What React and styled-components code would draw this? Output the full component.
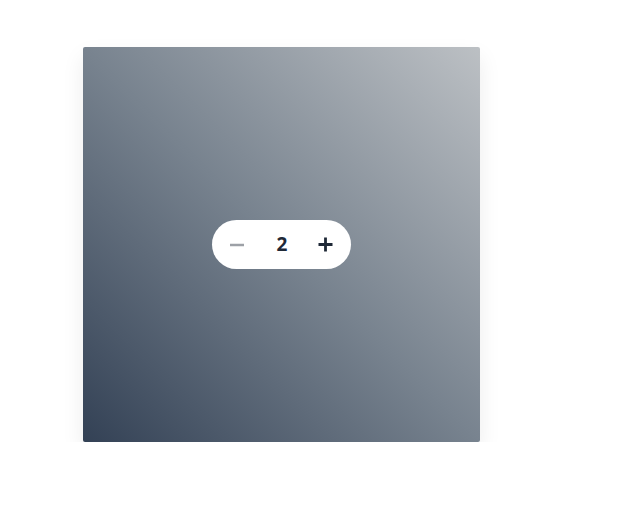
import React, { useState } from "react";
import styled, { createGlobalStyle } from "styled-components";

const GlobalStyle = createGlobalStyle`
    body {
        margin: 0;
        background: #ffffff;
        font-family: "Open Sans", "Noto Sans", sans-serif;
    }
`;

const Page = styled.div`
    padding: 47px 0 0 83px;
`;

const Card = styled.div`
    width: 397px;
    height: 395px;
    border-radius: 2px;
    background: linear-gradient(to top right, #334155 0%, #78838f 50%, #bcc0c4 100%);
    box-shadow: 0 10px 22px rgba(0, 0, 0, 0.08);
    display: flex;
    align-items: center;
    justify-content: center;
`;

const Stepper = styled.div`
    width: 139px;
    height: 49px;
    border-radius: 25px;
    background: #ffffff;
    display: flex;
    align-items: center;
    justify-content: space-between;
    padding: 0 17px 0 16px;
    box-sizing: border-box;
`;

const StepButton = styled.button`
    width: 18px;
    height: 18px;
    border: none;
    background: none;
    padding: 0;
    display: flex;
    align-items: center;
    justify-content: center;
    cursor: pointer;
    color: ${(p) => (p.$disabled ? "#9da1a7" : "#1f2937")};
`;

const Count = styled.span`
    font-size: 19px;
    font-weight: 700;
    color: #1f2937;
    line-height: 1;
    margin-left: 2px;
`;

const App = () => {
    const [count, setCount] = useState(2);

    return (
        <Page>
            <GlobalStyle />
            <Card>
                <Stepper>
                    <StepButton $disabled onClick={() => setCount(Math.max(1, count - 1))}>
                        <svg width="16" height="16" viewBox="0 0 16 16">
                            <path d="M1 8h14" stroke="currentColor" strokeWidth="2.5" />
                        </svg>
                    </StepButton>
                    <Count>{count}</Count>
                    <StepButton onClick={() => setCount(count + 1)}>
                        <svg width="15" height="15" viewBox="0 0 15 15">
                            <path d="M0.5 7.5h14M7.5 0.5v14" stroke="currentColor" strokeWidth="2.8" />
                        </svg>
                    </StepButton>
                </Stepper>
            </Card>
        </Page>
    );
};

export default App;
